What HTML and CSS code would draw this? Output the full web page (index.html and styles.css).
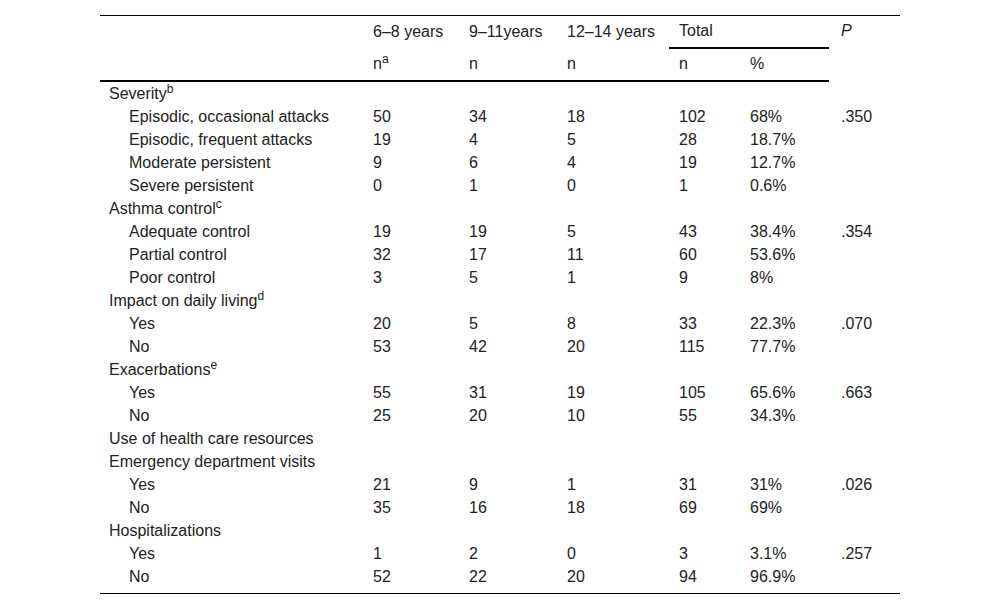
FILE: index.html
```html
<!DOCTYPE html>
<html lang="en">
<head>
    <meta charset="UTF-8">
    <title>Asthma severity by age group</title>
    <link rel="stylesheet" href="styles.css">
</head>
<body>
    <div class="page">
        <table class="data-table">
            <colgroup>
                <col class="c-label">
                <col class="c-age1">
                <col class="c-age2">
                <col class="c-age3">
                <col class="c-n">
                <col class="c-pct">
                <col class="c-p">
            </colgroup>
            <thead>
                <tr class="head-1">
                    <th></th>
                    <th>6&ndash;8 years</th>
                    <th>9&ndash;11years</th>
                    <th>12&ndash;14 years</th>
                    <th colspan="2" class="total">Total</th>
                    <th rowspan="2" class="p-head"><em>P</em></th>
                </tr>
                <tr class="head-2">
                    <th></th>
                    <th>n<sup>a</sup></th>
                    <th>n</th>
                    <th>n</th>
                    <th>n</th>
                    <th>%</th>
                </tr>
            </thead>
            <tbody>
                <tr class="group"><td>Severity<sup>b</sup></td><td></td><td></td><td></td><td></td><td></td><td></td></tr>
                <tr><td class="sub">Episodic, occasional attacks</td><td>50</td><td>34</td><td>18</td><td>102</td><td>68%</td><td class="p">.350</td></tr>
                <tr><td class="sub">Episodic, frequent attacks</td><td>19</td><td>4</td><td>5</td><td>28</td><td>18.7%</td><td class="p"></td></tr>
                <tr><td class="sub">Moderate persistent</td><td>9</td><td>6</td><td>4</td><td>19</td><td>12.7%</td><td class="p"></td></tr>
                <tr><td class="sub">Severe persistent</td><td>0</td><td>1</td><td>0</td><td>1</td><td>0.6%</td><td class="p"></td></tr>
                <tr class="group"><td>Asthma control<sup>c</sup></td><td></td><td></td><td></td><td></td><td></td><td></td></tr>
                <tr><td class="sub">Adequate control</td><td>19</td><td>19</td><td>5</td><td>43</td><td>38.4%</td><td class="p">.354</td></tr>
                <tr><td class="sub">Partial control</td><td>32</td><td>17</td><td>11</td><td>60</td><td>53.6%</td><td class="p"></td></tr>
                <tr><td class="sub">Poor control</td><td>3</td><td>5</td><td>1</td><td>9</td><td>8%</td><td class="p"></td></tr>
                <tr class="group"><td>Impact on daily living<sup>d</sup></td><td></td><td></td><td></td><td></td><td></td><td></td></tr>
                <tr><td class="sub">Yes</td><td>20</td><td>5</td><td>8</td><td>33</td><td>22.3%</td><td class="p">.070</td></tr>
                <tr><td class="sub">No</td><td>53</td><td>42</td><td>20</td><td>115</td><td>77.7%</td><td class="p"></td></tr>
                <tr class="group"><td>Exacerbations<sup>e</sup></td><td></td><td></td><td></td><td></td><td></td><td></td></tr>
                <tr><td class="sub">Yes</td><td>55</td><td>31</td><td>19</td><td>105</td><td>65.6%</td><td class="p">.663</td></tr>
                <tr><td class="sub">No</td><td>25</td><td>20</td><td>10</td><td>55</td><td>34.3%</td><td class="p"></td></tr>
                <tr class="group"><td>Use of health care resources</td><td></td><td></td><td></td><td></td><td></td><td></td></tr>
                <tr class="group"><td>Emergency department visits</td><td></td><td></td><td></td><td></td><td></td><td></td></tr>
                <tr><td class="sub">Yes</td><td>21</td><td>9</td><td>1</td><td>31</td><td>31%</td><td class="p">.026</td></tr>
                <tr><td class="sub">No</td><td>35</td><td>16</td><td>18</td><td>69</td><td>69%</td><td class="p"></td></tr>
                <tr class="group"><td>Hospitalizations</td><td></td><td></td><td></td><td></td><td></td><td></td></tr>
                <tr><td class="sub">Yes</td><td>1</td><td>2</td><td>0</td><td>3</td><td>3.1%</td><td class="p">.257</td></tr>
                <tr class="last"><td class="sub">No</td><td>52</td><td>22</td><td>20</td><td>94</td><td>96.9%</td><td class="p"></td></tr>
            </tbody>
        </table>
    </div>
</body>
</html>
```

FILE: styles.css
```css
* {
    margin: 0;
    padding: 0;
    box-sizing: border-box;
}

body {
    background: #fff;
    color: #222;
    font-family: 'Liberation Sans', Arial, sans-serif;
    font-size: 16px;
}

.page {
    padding: 15px 100px 0;
}

/* table */
.data-table {
    width: 800px;
    border-collapse: collapse;
    table-layout: fixed;
    border-top: 1px solid #000;
    border-bottom: 1px solid #000;
}

.c-label { width: 263px; }
.c-age1 { width: 96px; }
.c-age2 { width: 98px; }
.c-age3 { width: 112px; }
.c-n { width: 71px; }
.c-pct { width: 89px; }
.c-p { width: 71px; }

.data-table th,
.data-table td {
    text-align: left;
    font-weight: normal;
    padding: 0 0 0 10px;
    white-space: nowrap;
}

.data-table th {
    vertical-align: middle;
}

.head-1 th {
    height: 32px;
}

.head-1 .total {
    border-bottom: 2px solid #000;
}

.head-2 th {
    height: 33px;
    border-bottom: 2px solid #000;
}

.head-1 .p-head {
    vertical-align: top;
    padding-top: 6px;
    padding-left: 12px;
}

.data-table td {
    height: 23px;
    line-height: 23px;
}

.data-table tr.group td:first-child {
    padding-left: 9px;
}

.data-table td.sub {
    padding-left: 29px;
}

.data-table td.p {
    padding-left: 12px;
}

.data-table tr.last td {
    height: 28px;
    padding-bottom: 5px;
}

sup {
    font-size: 12px;
    line-height: 0;
    vertical-align: 6px;
}
```
